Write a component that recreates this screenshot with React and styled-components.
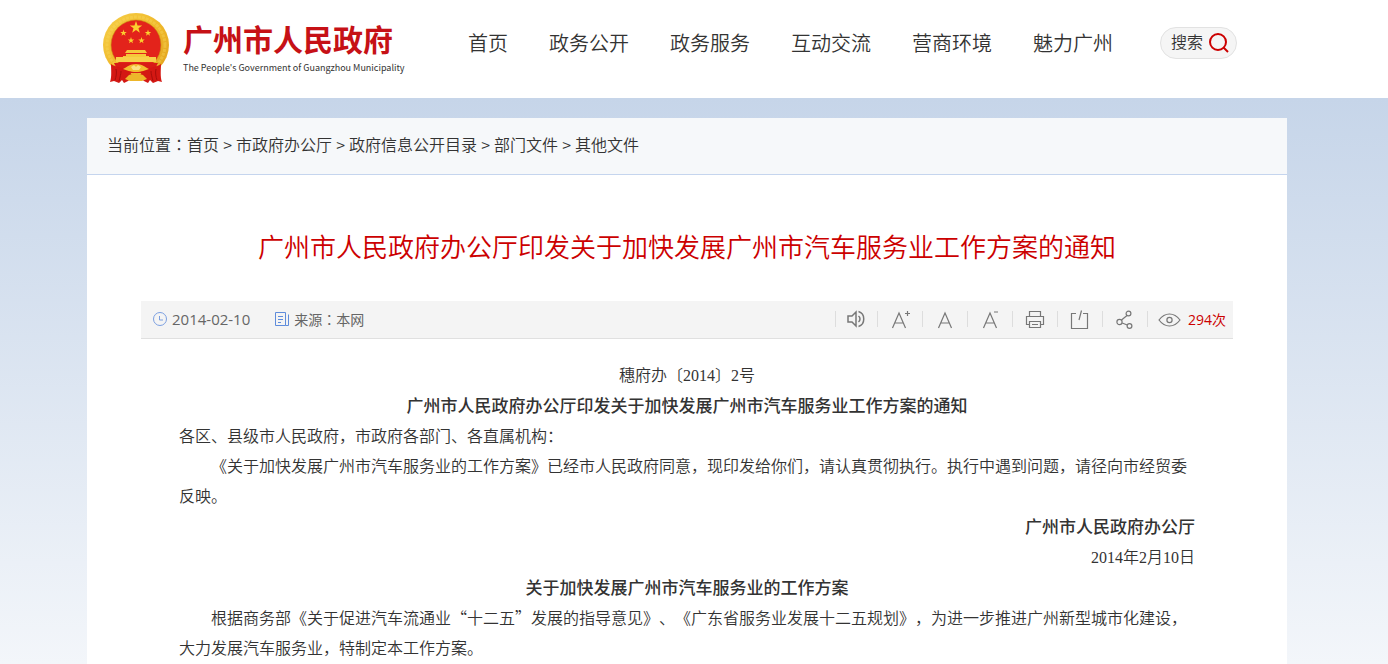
import styled, { createGlobalStyle } from "styled-components"

const sans = `"Open Sans", "Noto Sans CJK SC", sans-serif`
const song = `"Noto Sans CJK SC", sans-serif`

const navItems = ["首页", "政务公开", "政务服务", "互动交流", "营商环境", "魅力广州"]
const crumbs = ["首页", "市政府办公厅", "政府信息公开目录", "部门文件", "其他文件"]

const star = (cx, cy, r) =>
    Array.from({ length: 10 }, (_, i) => {
        const radius = i % 2 ? r * 0.4 : r
        const angle = (Math.PI / 5) * i - Math.PI / 2
        return `${(cx + radius * Math.cos(angle)).toFixed(2)},${(cy + radius * Math.sin(angle)).toFixed(2)}`
    }).join(" ")

const Emblem = () => (
    <svg width="66" height="71" viewBox="0 0 66 71" aria-hidden="true">
        <defs>
            <linearGradient id="gold" x1="0" y1="0" x2="1" y2="1">
                <stop offset="0" stopColor="#f6d04a" />
                <stop offset="0.5" stopColor="#f0b92b" />
                <stop offset="1" stopColor="#e0a01c" />
            </linearGradient>
        </defs>
        <ellipse cx="33" cy="32" rx="33" ry="32" fill="url(#gold)" />
        <ellipse cx="33" cy="32" rx="29" ry="28" fill="none" stroke="#f9dc62" strokeWidth="3" strokeDasharray="3 1" opacity="0.35" />
        <circle cx="33" cy="32" r="25" fill="#e3231b" stroke="#c98d12" strokeWidth="0.6" />
        <polygon points={star(33, 14.5, 6.5)} fill="#fbd02f" />
        <polygon points={star(20.5, 20, 3.4)} fill="#fbd02f" />
        <polygon points={star(45, 20, 3.4)} fill="#fbd02f" />
        <polygon points={star(28, 27.5, 3.4)} fill="#fbd02f" />
        <polygon points={star(38.5, 27.5, 3.4)} fill="#fbd02f" />
        <path d="M24 37h18l2 3H22zM23 41h20v2h3v3H20v-3h3z" fill="#f6c83a" />
        <path d="M13 44h40v5H13z" fill="#f8d04a" />
        <path d="M11 50h44l-5 10H16z" fill="#d81c16" />
        <path d="M8 51c5 4 12 2 19 8l3 5-5 4-4 2-2-3-3 3-5-2-4 1c2-5 1-13 1-18z" fill="#d41813" />
        <path d="M58 51c-5 4-12 2-19 8l-3 5 5 4 4 2 2-3 3 3 5-2 4 1c-2-5-1-13-1-18z" fill="#d41813" />
        <path d="M13 56c1 4 0 8-1 11M18 58c0 3-1 6-2 10M53 56c-1 4 0 8 1 11M48 58c0 3 1 6 2 10" stroke="#a70d0b" fill="none" />
        <path d="M20 56c4-2 7-5 13-5s9 3 13 5c-4 1-7 3-13 3s-9-2-13-3z" fill="#f3bd2e" />
        <path d="M33 60l-7 2-4 4 5 2h12l5-2-4-4z" fill="#edb62a" />
        <path d="M28 54l3-2 2 2 2-2 3 2-2 3h-6z" fill="#fbe184" />
    </svg>
)

const Icon = ({ size = 20, children, ...rest }) => (
    <svg width={size} height={size} viewBox={`0 0 ${size} ${size}`} fill="none" stroke="currentColor" strokeWidth="1.2" aria-hidden="true" {...rest}>
        {children}
    </svg>
)

const tools = [
    { label: "朗读", width: 42, icon: <Icon strokeWidth="1.5"><path d="M2 7h4l4-4v14l-4-4H2zM12.500 7c2 1.500 2 4.500 0 6M12.500 2.500c7 2 7 13 0 15" /></Icon> },
    { label: "放大字体", width: 45, icon: <Icon><path d="M2.500 19L9 4l6.500 15M5 14h8M15 4.500h5M17.500 2v5" /></Icon> },
    { label: "默认字体", width: 45, icon: <Icon><path d="M3.500 19L10 4l6.500 15M6 14h8" /></Icon> },
    { label: "缩小字体", width: 45, icon: <Icon><path d="M3.500 19L10 4l6.500 15M6 14h8M14 3h4" /></Icon> },
    { label: "打印", width: 45, icon: <Icon><path d="M4.500 7.500v-5h11v5M4.500 15.500h-3v-8h17v8h-3M4.500 12.500h11v6h-11zM7 15.500h6" /></Icon> },
    { label: "纠错", width: 45, icon: <Icon><path d="M6 4.500H1.500v15h16v-15H13M11.500 1.500L9 11" /></Icon> },
    { label: "分享", width: 45, icon: <Icon><circle cx="13.500" cy="4.500" r="2.400" /><circle cx="4.500" cy="13" r="2.600" /><circle cx="14.500" cy="17" r="2.400" /><path d="M12 6.500L6.500 11M7.200 14l5 2" /></Icon> },
]

export default function App() {
    return (
        <>
            <GlobalStyle />
            <Header>
                <HeaderInner>
                    <Brand href="#">
                        <Emblem />
                        <BrandText>
                            <BrandName>广州市人民政府</BrandName>
                            <BrandSub>The People's Government of Guangzhou Municipality</BrandSub>
                        </BrandText>
                    </Brand>
                    <Nav>
                        {navItems.map((item) => <NavLink href="#" key={item}>{item}</NavLink>)}
                    </Nav>
                    <SearchButton type="button">
                        <span>搜索</span>
                        <svg width="20" height="20" viewBox="0 0 20 20" fill="none" stroke="#cc0000" strokeWidth="2" aria-hidden="true">
                            <circle cx="9" cy="9" r="8" />
                            <path d="M14.500 14.500L19 19" />
                        </svg>
                    </SearchButton>
                </HeaderInner>
            </Header>
            <Main>
                <Panel>
                    <Breadcrumb>
                        当前位置<Colon>：</Colon>
                        {crumbs.map((item, i) => (
                            <span key={item}>
                                {i > 0 && <Separator>&gt;</Separator>}
                                <a href="#">{item}</a>
                            </span>
                        ))}
                    </Breadcrumb>
                    <Article>
                        <Title>广州市人民政府办公厅印发关于加快发展广州市汽车服务业工作方案的通知</Title>
                        <InfoBar>
                            <InfoItem $size={15}>
                                <Icon size={14} stroke="#7b9fe0" strokeWidth="1">
                                    <circle cx="7" cy="7" r="6.500" /><path d="M6.500 4v4H10" />
                                </Icon>
                                2014-02-10
                            </InfoItem>
                            <InfoItem $size={14}>
                                <Icon size={14} stroke="#5f8cdb" strokeWidth="1">
                                    <path d="M.500 .500h10v13H.500zM13.500 2.500v11h-3M3 4.500h5M3 7.500h5M3 10.500h3" />
                                </Icon>
                                <span>来源<Colon>：</Colon>本网</span>
                            </InfoItem>
                            <Tools>
                                {tools.map((tool) => (
                                    <ToolButton type="button" key={tool.label} aria-label={tool.label} $width={tool.width}>
                                        {tool.icon}
                                    </ToolButton>
                                ))}
                                <Views>
                                    <svg width="24" height="16" viewBox="0 0 24 16" fill="none" stroke="#777" strokeWidth="1.200" aria-hidden="true">
                                        <path d="M1 9c6-8 15-8 21 0-6 8-15 8-21 0z" /><circle cx="11.500" cy="9" r="2.600" />
                                    </svg>
                                    <span>294次</span>
                                </Views>
                            </Tools>
                        </InfoBar>
                        <Content>
                            <Paragraph $align="center">穗府办〔<Num>2014</Num>〕<Num>2</Num>号</Paragraph>
                            <Strong $align="center">广州市人民政府办公厅印发关于加快发展广州市汽车服务业工作方案的通知</Strong>
                            <Paragraph>各区、县级市人民政府，市政府各部门、各直属机构：</Paragraph>
                            <Paragraph $indent>《关于加快发展广州市汽车服务业的工作方案》已经市人民政府同意，现印发给你们，请认真贯彻执行。执行中遇到问题，请径向市经贸委反映。</Paragraph>
                            <Strong $align="right">广州市人民政府办公厅</Strong>
                            <Paragraph $align="right"><Num>2014</Num>年<Num>2</Num>月<Num>10</Num>日</Paragraph>
                            <Strong $align="center">关于加快发展广州市汽车服务业的工作方案</Strong>
                            <Paragraph $indent>根据商务部《关于促进汽车流通业“十二五”发展的指导意见》、《广东省服务业发展十二五规划》，为进一步推进广州新型城市化建设，大力发展汽车服务业，特制定本工作方案。</Paragraph>
                        </Content>
                    </Article>
                </Panel>
            </Main>
        </>
    )
}

const GlobalStyle = createGlobalStyle`
    * {
        box-sizing: border-box;
    }
    html {
        height: 100%;
        overflow: hidden;
    }
    body {
        height: 100%;
        margin: 0;
        overflow: hidden;
        font-family: ${sans};
        color: #333;
        background: #fff;
        text-spacing-trim: space-all;
    }
    #root {
        height: 100%;
        display: flex;
        flex-direction: column;
    }
    a {
        color: inherit;
        text-decoration: none;
    }
    p, h1 {
        margin: 0;
    }
`

const Header = styled.header`
    flex: none;
    height: 98px;
    padding-right: 14px;
    background: #fff;
`

const HeaderInner = styled.div`
    max-width: 1200px;
    margin: 0 auto;
    display: flex;
    align-items: flex-start;
`

const Brand = styled.a`
    display: flex;
    gap: 14px;
    width: 381px;
    padding: 13px 0 0 16px;
`

const BrandText = styled.div`
    padding-top: 6px;
    white-space: nowrap;
`

const BrandName = styled.div`
    font-family: ${song};
    font-size: 30px;
    font-weight: 700;
    line-height: 38px;
    color: #c61116;
`

const BrandSub = styled.div`
    font-family: ${song};
    font-size: 9px;
    line-height: 22px;
    color: #333;
`

const Nav = styled.nav`
    display: flex;
    gap: 41px;
    padding-top: 28px;
`

const NavLink = styled.a`
    font-family: ${song};
    font-size: 20px;
    font-weight: 350;
    line-height: 30px;
`

const SearchButton = styled.button`
    display: flex;
    align-items: center;
    gap: 6px;
    height: 32px;
    margin: 27px 0 0 47px;
    padding: 0 7px 0 10px;
    border: 1px solid #e2e2e2;
    border-radius: 16px;
    background: #f5f5f5;
    color: #333;
    font-family: ${song};
    font-size: 16px;
    font-weight: 350;

    span {
        padding-bottom: 4px;
    }
`

const Main = styled.main`
    flex: 1;
    min-height: 0;
    padding: 20px 14px 0 0;
    background: linear-gradient(#c6d5e9, #f3f6fa);
`

const Panel = styled.div`
    max-width: 1200px;
    height: 100%;
    margin: 0 auto;
    background: #fff;
`

const Breadcrumb = styled.nav`
    padding: 12px 20px 16px;
    border-bottom: 1px solid #c5d5ee;
    background: #f6f8fa;
    font-family: ${song};
    font-size: 16px;
    font-weight: 350;
    line-height: 28px;
`

const Colon = styled.span`
    font-family: "Noto Sans CJK TC", sans-serif;
    line-height: 1;
`

const Separator = styled.span`
    display: inline-block;
    width: 17px;
    text-align: center;
`

const Article = styled.article`
    padding: 51px 54px 0;
`

const Title = styled.h1`
    font-family: ${song};
    font-size: 26px;
    font-weight: 350;
    line-height: 40px;
    text-align: center;
    color: #c00;
`

const InfoBar = styled.div`
    display: flex;
    align-items: center;
    gap: 25px;
    height: 38px;
    margin-top: 35px;
    padding: 0 7px 2px 12px;
    border-bottom: 1px solid #e0e0e0;
    background: #f4f4f4;
    color: #666;
`

const InfoItem = styled.span`
    display: flex;
    align-items: center;
    gap: 5px;
    font-size: ${({ $size }) => $size}px;
`

const Tools = styled.div`
    display: flex;
    align-items: center;
    margin-left: auto;
`

const ToolButton = styled.button`
    display: flex;
    align-items: center;
    justify-content: center;
    width: ${({ $width }) => $width}px;
    height: 16px;
    padding: 0;
    border: 0;
    border-left: 1px solid #ddd;
    background: none;
    color: #777;

    svg {
        flex: none;
    }
`

const Views = styled.div`
    display: flex;
    align-items: center;
    gap: 6px;
    height: 16px;
    padding-left: 10px;
    border-left: 1px solid #ddd;
    font-size: 14px;
    color: #c00;
`

const Content = styled.div`
    padding: 20px 38px 0;
`

const Paragraph = styled.p`
    font-family: ${song};
    font-size: 16px;
    font-weight: 350;
    line-height: 30px;
    text-align: ${({ $align }) => $align || "left"};
    text-indent: ${({ $indent }) => ($indent ? "2em" : 0)};
`

const Strong = styled(Paragraph)`
    font-size: 17px;
    font-weight: 500;
    line-height: 31px;
`

const Num = styled.span`
    font-family: "Liberation Serif", serif;
    line-height: 1;
`
